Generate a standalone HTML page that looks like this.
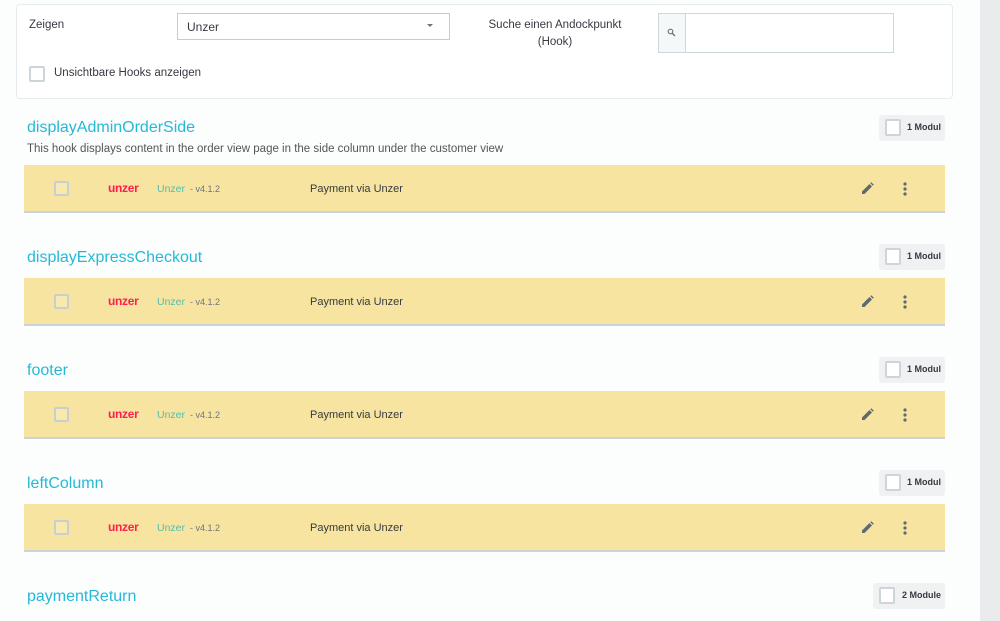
<!DOCTYPE html>
<html><head><meta charset="utf-8"><style>
*{box-sizing:border-box;margin:0;padding:0}
body{width:1000px;height:621px;overflow:hidden;background:#fcfdfd;font-family:"Liberation Sans",sans-serif;color:#363a41;position:relative}
.a{position:absolute}
.strip{left:980px;top:0;width:20px;height:621px;background:#eaebec}
.panel{left:16px;top:4px;width:937px;height:95px;background:#fff;border:1px solid #e6ebed;border-radius:4px}
.cb{width:16px;height:16px;border:2px solid #cdd5d9;background:#fff;border-radius:2px}
.title{color:#25b9d7;font-size:16px;left:27px}
.row{left:24px;width:921px;height:48px;background:#f6e4a0;border-bottom:2px solid #cbd3d7}
.badge{height:26px;background:#eff1f2;border-radius:3px;font-size:9px;font-weight:bold;color:#363a41}
.badge .cb{position:absolute;left:6px;top:4px;width:16px;height:17px}
.badge span{position:absolute;top:7px}
.logo{color:#ff1f4f;font-weight:bold;font-size:12px;letter-spacing:-0.3px}
.mod{color:#4ebfb0;font-size:10.5px}
.ver{color:#6c757d;font-size:9px}
.desc{font-size:11px;color:#363a41}
</style></head><body>
<div class="a strip"></div>
<div class="a panel"></div>
<div class="a" style="left:29px;top:19px;font-size:11.5px">Zeigen</div>
<div class="a" style="left:177px;top:13px;width:273px;height:27px;border:1px solid #9adcea;background:#fff"></div>
<div class="a" style="left:187px;top:20px;font-size:12px">Unzer</div>
<div class="a" style="left:427px;top:24px;width:0;height:0;border-left:3px solid transparent;border-right:3px solid transparent;border-top:3px solid #6c757d"></div>
<div class="a" style="left:470px;top:17px;width:170px;text-align:center;font-size:11.5px;line-height:17px">Suche einen Andockpunkt<br>(Hook)</div>
<div class="a" style="left:658px;top:13px;width:236px;height:40px;border:1px solid #cbd9dd;background:#fff"></div>
<div class="a" style="left:659px;top:14px;width:27px;height:38px;background:#f5f8f9;border-right:1px solid #cbd9dd"></div>
<svg class="a" style="left:667px;top:28px" width="9" height="9" viewBox="0 0 9 9"><circle cx="3.5" cy="3.5" r="2.3" fill="none" stroke="#6c757d" stroke-width="1.2"/><path d="M5.2 5.2L8 8" stroke="#6c757d" stroke-width="1.4"/></svg>
<div class="a cb" style="left:29px;top:66px;width:16px;height:16px"></div>
<div class="a" style="left:54px;top:67px;font-size:11.5px">Unsichtbare Hooks anzeigen</div>

<div class="a title" style="top:119px">displayAdminOrderSide</div>
<div class="a desc" style="left:27px;top:143px;font-size:11.5px;color:#555">This hook displays content in the order view page in the side column under the customer view</div>
<div class="a badge" style="left:879px;top:115px;width:66px"><div class="cb"></div><span style="left:28px">1 Modul</span></div>

<div class="a title" style="top:249px">displayExpressCheckout</div>
<div class="a badge" style="left:879px;top:244px;width:66px"><div class="cb"></div><span style="left:28px">1 Modul</span></div>
<div class="a title" style="top:362px">footer</div>
<div class="a badge" style="left:879px;top:357px;width:66px"><div class="cb"></div><span style="left:28px">1 Modul</span></div>
<div class="a title" style="top:475px">leftColumn</div>
<div class="a badge" style="left:879px;top:470px;width:66px"><div class="cb"></div><span style="left:28px">1 Modul</span></div>
<div class="a title" style="top:588px">paymentReturn</div>
<div class="a badge" style="left:873px;top:583px;width:72px"><div class="cb"></div><span style="left:29px">2 Module</span></div>

<div id="rows"></div>
<script>
var tops=[165,278,391,504],h='';
tops.forEach(function(t){
h+='<div class="a row" style="top:'+t+'px"></div>'+
'<div class="a cb" style="left:54px;top:'+(t+16)+'px;width:15px;height:15px;border-color:#c8cfd0;background:#f9e9ad"></div>'+
'<div class="a logo" style="left:108px;top:'+(t+16)+'px">unzer</div>'+
'<div class="a mod" style="left:157px;top:'+(t+18)+'px">Unzer</div>'+
'<div class="a ver" style="left:190px;top:'+(t+19)+'px">- v4.1.2</div>'+
'<div class="a desc" style="left:310px;top:'+(t+18)+'px">Payment via Unzer</div>'+
'<svg class="a" style="left:861px;top:'+(t+17)+'px" width="13" height="13" viewBox="0 0 13 13"><path d="M1 12V9.5L8.5 2L11 4.5L3.5 12Z" fill="#5e6a70"/><path d="M9.3 1.2L10.3 0.2L12.8 2.7L11.8 3.7Z" fill="#5e6a70"/></svg>'+
'<svg class="a" style="left:902px;top:'+(t+16)+'px" width="6" height="16" viewBox="0 0 6 16"><circle cx="3" cy="3" r="1.6" fill="#5e6a70"/><circle cx="3" cy="8" r="1.6" fill="#5e6a70"/><circle cx="3" cy="13" r="1.6" fill="#5e6a70"/></svg>';
});
document.getElementById('rows').innerHTML=h;
</script>
</body></html>
